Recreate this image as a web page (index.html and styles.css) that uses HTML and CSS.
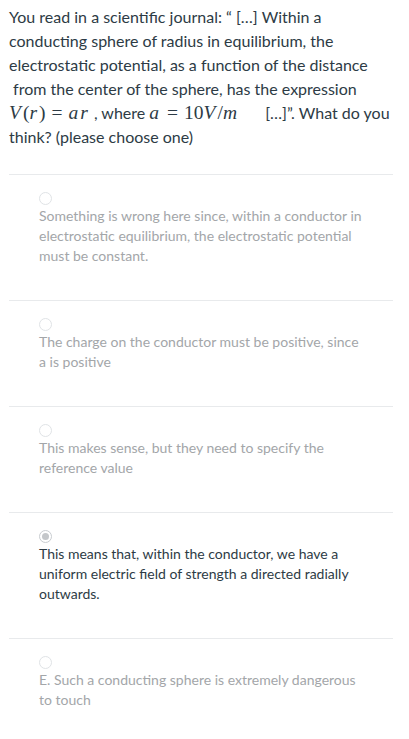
FILE: index.html
```html
<!DOCTYPE html>
<html>
<head>
<meta charset="utf-8">
<link rel="stylesheet" href="styles.css">
</head>
<body>
<div class="quiz">
  <div class="question">You read in a scientific journal: “ […] Within a conducting sphere of radius in equilibrium, the electrostatic potential, as a function of the distance &nbsp;from the center of the sphere, has the expression <span class="math"><i>V</i>(<i>r</i>)<span class="eq">=</span><i>a</i><i>r</i></span> , where <span class="math"><i>a</i><span class="eq">=</span>10<i>V</i>/<i>m</i></span> <span class="gap"></span>[…]”. What do you think? (please choose one)</div>
  <div class="options">
    <div class="option">
      <span class="radio"></span>
      <div class="label">Something is wrong here since, within a conductor in electrostatic equilibrium, the electrostatic potential must be constant.</div>
    </div>
    <div class="option">
      <span class="radio"></span>
      <div class="label">The charge on the conductor must be positive, since a is positive</div>
    </div>
    <div class="option">
      <span class="radio"></span>
      <div class="label">This makes sense, but they need to specify the reference value</div>
    </div>
    <div class="option selected">
      <span class="radio"></span>
      <div class="label">This means that, within the conductor, we have a uniform electric field of strength a directed radially outwards.</div>
    </div>
    <div class="option">
      <span class="radio"></span>
      <div class="label">E. Such a conducting sphere is extremely dangerous to touch</div>
    </div>
  </div>
</div>
</body>
</html>
```
FILE: styles.css
```css
html, body {
  margin: 0;
  padding: 0;
  background: #fff;
}
body {
  font-family: Lato, "Noto Sans", sans-serif;
}
.quiz {
  width: 384px;
  margin-left: 9px;
  padding-top: 5px;
}
.question {
  font-size: 16px;
  line-height: 24px;
  color: #2d3b45;
  padding-bottom: 25px;
}
.math {
  font-family: "Liberation Serif", "Times New Roman", serif;
  font-size: 19.5px;
  line-height: 1;
  white-space: nowrap;
}
.math i {
  font-style: italic;
  padding-right: 2px;
}
.eq {
  padding: 0 6px;
}
.gap {
  display: inline-block;
  width: 22px;
}
.options {
  border-top: 1px solid #e8eaec;
}
.option {
  border-bottom: 1px solid #e8eaec;
  padding: 17px 27px 34px 30px;
  display: flex;
  flex-direction: column;
  align-items: flex-start;
}
.radio {
  width: 11px;
  height: 11px;
  border: 1px solid #e0e3e6;
  border-radius: 50%;
  box-sizing: content-box;
  background: #fff;
  position: relative;
}
.selected .radio {
  border-color: #c9cdd1;
}
.selected .radio::after {
  content: "";
  position: absolute;
  left: 2px;
  top: 2px;
  width: 7px;
  height: 7px;
  border-radius: 50%;
  background: #c4c7ca;
}
.label {
  font-size: 14px;
  line-height: 20px;
  color: #a3a6a9;
  margin-top: 1px;
}
.selected .label {
  color: #2d3b45;
}
.option:last-child {
  border-bottom: none;
}
```
